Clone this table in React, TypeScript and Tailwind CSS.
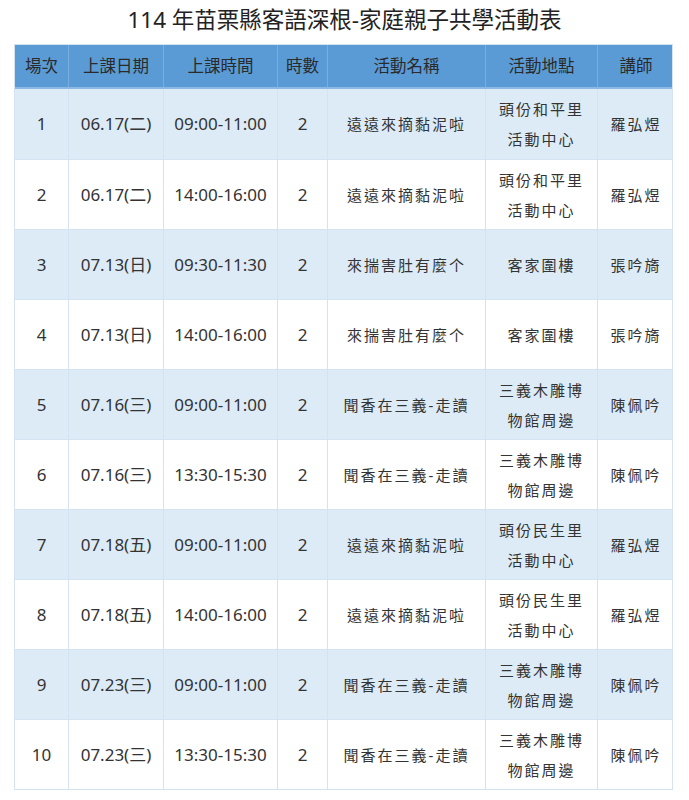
import React from "react";

const rows = [
  ["1", "06.17(二)", "09:00-11:00", "2", "遠遠來摘黏泥啦", ["頭份和平里", "活動中心"], "羅弘煜"],
  ["2", "06.17(二)", "14:00-16:00", "2", "遠遠來摘黏泥啦", ["頭份和平里", "活動中心"], "羅弘煜"],
  ["3", "07.13(日)", "09:30-11:30", "2", "來揣害肚有麼个", ["客家圍樓"], "張吟旖"],
  ["4", "07.13(日)", "14:00-16:00", "2", "來揣害肚有麼个", ["客家圍樓"], "張吟旖"],
  ["5", "07.16(三)", "09:00-11:00", "2", "聞香在三義-走讀", ["三義木雕博", "物館周邊"], "陳佩吟"],
  ["6", "07.16(三)", "13:30-15:30", "2", "聞香在三義-走讀", ["三義木雕博", "物館周邊"], "陳佩吟"],
  ["7", "07.18(五)", "09:00-11:00", "2", "遠遠來摘黏泥啦", ["頭份民生里", "活動中心"], "羅弘煜"],
  ["8", "07.18(五)", "14:00-16:00", "2", "遠遠來摘黏泥啦", ["頭份民生里", "活動中心"], "羅弘煜"],
  ["9", "07.23(三)", "09:00-11:00", "2", "聞香在三義-走讀", ["三義木雕博", "物館周邊"], "陳佩吟"],
  ["10", "07.23(三)", "13:30-15:30", "2", "聞香在三義-走讀", ["三義木雕博", "物館周邊"], "陳佩吟"],
] as const;

const headers = ["場次", "上課日期", "上課時間", "時數", "活動名稱", "活動地點", "講師"];
const widths = ["w-[53px]", "w-[95px]", "w-[114px]", "w-[50px]", "w-[158px]", "w-[112px]", "w-[77px]"];

export default function App() {
  return (
    <div
      className="w-[689px] h-[800px] bg-white text-[#333333]"
      style={{ fontFamily: '"Noto Sans", "Noto Sans CJK TC", sans-serif' }}
    >
      <div className="h-[44px] flex items-center justify-center pb-[4px] text-[22.5px] text-[#222222]">
        114 年苗栗縣客語深根-家庭親子共學活動表
      </div>
      <div className="mx-[14px] w-[659px] border border-[#d4e2f1]">
        <div className="flex h-[44px] bg-[#5b9bd5] border-b-2 border-b-[#8db8e3]">
          {headers.map((h, i) => (
            <div
              key={h}
              className={`${widths[i]} shrink-0 flex items-center justify-center text-[16.5px] text-[#2a2a2a] ${i > 0 ? "border-l border-l-[#7aaee0]" : ""}`}
            >
              {h}
            </div>
          ))}
        </div>
        {rows.map((r, ri) => (
          <div
            key={ri}
            className={`flex h-[70px] ${ri % 2 === 0 ? "bg-[#ddebf7]" : "bg-white"} ${ri > 0 ? "border-t border-t-[#d4e2f1]" : ""}`}
          >
            {r.map((c, ci) => (
              <div
                key={ci}
                className={`${widths[ci]} shrink-0 flex flex-col items-center justify-center ${ci > 0 ? "border-l border-l-[#d4e2f1]" : ""} ${ci >= 4 ? "text-[15px] tracking-[2px]" : "text-[17px]"}`}
              >
                {Array.isArray(c) ? (
                  (c as readonly string[]).map((l) => (
                    <div key={l} className="leading-[30px]">
                      {l}
                    </div>
                  ))
                ) : (
                  <div className="leading-[30px]">{c as string}</div>
                )}
              </div>
            ))}
          </div>
        ))}
      </div>
    </div>
  );
}
